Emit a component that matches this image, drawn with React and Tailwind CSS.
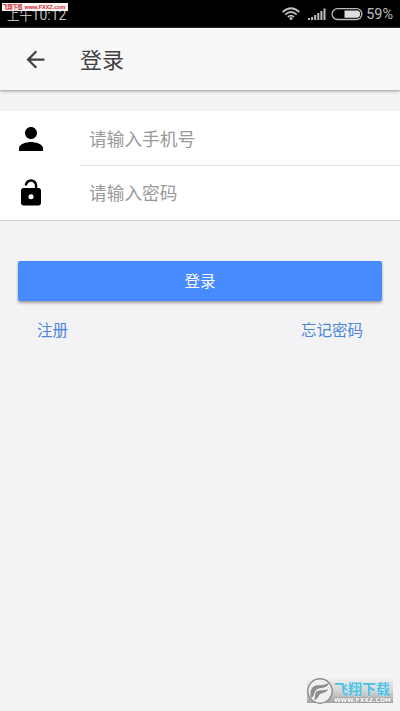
import React from "react";

function StatusBar() {
  return (
    <header className="relative flex h-7 shrink-0 items-center justify-between border-b border-[#2c2c2c] bg-black pr-[6px] pl-[7px] text-[#bdbdbd]">
      <svg width="64" height="28" viewBox="0 0 64 28" className="block">
        <text x="0" y="20" fontSize="14.5" fill="currentColor" textLength="25" lengthAdjust="spacingAndGlyphs">上午</text>
        <text x="24.5" y="19.5" fontSize="15.5" fill="currentColor" textLength="35" lengthAdjust="spacingAndGlyphs" fontFamily="Roboto">10:12</text>
      </svg>
      <div className="flex h-7 items-center">
        <svg width="83" height="28" viewBox="0 0 83 28" fill="none" stroke="currentColor">
          <g strokeWidth="1.8">
            <path d="M1.6 12.1Q10 4.4 18.4 12.1" />
            <path d="M4.3 14.6Q10 9.3 15.7 14.6" />
            <path d="M6.9 17Q10 14.2 13.1 17" />
          </g>
          <circle cx="10" cy="18.5" r="1.5" fill="currentColor" stroke="none" />
          <path strokeWidth="2" d="M28 20v-2M31.1 20v-3M34.2 20v-5M37.3 20v-7M40.4 20v-9M43.5 20V8.5" />
          <rect x="51.100" y="8.7" width="29.8" height="10.8" rx="5.4" strokeWidth="1.3" />
          <path d="M63.5 10.4h12a3.7 3.7 0 0 1 0 7.4h-12z" fill="#dedede" stroke="none" />
        </svg>
        <svg width="30" height="28" viewBox="0 0 30 28">
          <text x="2.2" y="19.3" fontSize="14.5" fill="currentColor" textLength="26.8" lengthAdjust="spacingAndGlyphs" fontFamily="Roboto">59%</text>
        </svg>
      </div>
      <svg className="absolute top-[3px] left-[2px]" width="66" height="8" viewBox="0 0 66 8">
        <rect width="66" height="8" fill="#fff5f5" />
        <g fill="#d51e2d" fontWeight="700">
          <text x="0.5" y="6.4" fontSize="6" textLength="20" lengthAdjust="spacingAndGlyphs">飞翔下载</text>
          <text x="22.5" y="6.3" fontSize="6.2" textLength="41" lengthAdjust="spacingAndGlyphs" fontFamily="Liberation Sans">www.FXXZ.com</text>
        </g>
      </svg>
    </header>
  );
}

function Field({ icon, label, divided }) {
  return (
    <div className="flex h-[54px] items-stretch">
      <div className="flex w-[62px] shrink-0 items-center justify-center pt-px">{icon}</div>
      <div className={`ml-[18px] flex flex-1 items-center pt-px pl-[9px] text-[17.7px] text-[#999] ${divided ? "shadow-[0_1px_0_#e4e4e4]" : ""}`}>
        {label}
      </div>
    </div>
  );
}

function Watermark() {
  return (
    <svg width="88" height="26" viewBox="0 0 88 26">
      <defs>
        <linearGradient id="plate" x1="0" y1="0" x2="0" y2="1">
          <stop offset="0" stopColor="#eeeeef" />
          <stop offset="0.55" stopColor="#cfcfd0" />
          <stop offset="1" stopColor="#a3a3a4" />
        </linearGradient>
      </defs>
      <rect x="1" y="1" width="86" height="24" fill="url(#plate)" />
      <circle cx="14" cy="13" r="12.2" fill="#f0f0f0" stroke="#8b8b8b" strokeWidth="1.4" />
      <path d="M6 10C9 5.500 16 8.500 23 5C21.500 10 16.500 9.500 12.500 10.500C9.500 11.300 8.500 14 7.500 18L5 20C4 16 4.300 12.500 6 10Z" fill="#8d8d8d" />
      <path d="M10 14C12.500 11.200 17 13.400 22 11C20.500 15.400 16.500 14.400 14.200 16C12.500 17.400 12.500 20.500 8 22.500C9.500 19.500 8.500 17 10 14Z" fill="#8d8d8d" />
      <text x="28" y="15.8" fontSize="14" fontWeight="700" textLength="56" lengthAdjust="spacingAndGlyphs" fill="#4dbfe2" stroke="#e8f7fc" strokeWidth="0.5" paintOrder="stroke">飞翔下载</text>
      <text x="28" y="23.6" fontSize="6" fontWeight="700" textLength="57" lengthAdjust="spacingAndGlyphs" fill="#fff" stroke="#8a8a8a" strokeWidth="0.6" paintOrder="stroke" fontFamily="DejaVu Sans">WWW.FXXZ.COM</text>
    </svg>
  );
}

export default function App() {
  return (
    <div className="flex h-[711px] w-[400px] flex-col overflow-hidden bg-[#f3f3f6] font-['Noto_Sans_CJK_SC',sans-serif]">
      <StatusBar />
      <nav className="z-10 flex h-[62px] shrink-0 items-center bg-[#f8f8f8] pl-[22px] shadow-[0_1px_3px_rgba(0,0,0,0.4)]">
        <svg width="27" height="27" viewBox="0 0 24 24" fill="#424242">
          <path d="M20 11H7.830l5.590-5.590L12 4l-8 8 8 8 1.410-1.410L7.830 13H20v-2z" />
        </svg>
        <h1 className="ml-[31px] pb-[2px] text-[22px] leading-8 text-[#424242]">登录</h1>
      </nav>
      <main className="flex flex-1 flex-col pt-[21px]">
        <section className="h-[110px] border-b border-[#d6d6da] bg-white">
          <Field
            divided
            label="请输入手机号"
            icon={
              <svg width="36" height="36" viewBox="0 0 24 24">
                <path d="M12 12c2.210 0 4-1.790 4-4s-1.790-4-4-4-4 1.790-4 4 1.790 4 4 4zm0 2c-2.670 0-8 1.340-8 4v2h16v-2c0-2.660-5.330-4-8-4z" />
              </svg>
            }
          />
          <Field
            label="请输入密码"
            icon={
              <svg width="30" height="30" viewBox="0 0 24 24" className="mt-px">
                <path
                  fillRule="evenodd"
                  d="M18 8h-1V6c0-2.760-2.240-5-5-5S7 3.240 7 6h1.900c0-1.710 1.390-3.100 3.100-3.100s3.100 1.390 3.100 3.100v2H6c-1.100 0-2 .9-2 2v10c0 1.100.9 2 2 2h12c1.100 0 2-.9 2-2V10c0-1.100-.9-2-2-2zM12 17a2 2 0 1 1 0-4 2 2 0 0 1 0 4z"
                />
              </svg>
            }
          />
        </section>
        <button className="mx-[18px] mt-10 h-10 rounded-[2px] bg-[#488aff] text-[15.5px] text-white shadow-[0_2px_3px_rgba(0,0,0,0.35)]">登录</button>
        <div className="mt-4 flex justify-between pr-[37px] pl-[37px] text-[15.5px] leading-6 text-[#4b85d9]">
          <a>注册</a>
          <a>忘记密码</a>
        </div>
        <footer className="mt-auto flex justify-end pr-[6px] pb-[7px]">
          <Watermark />
        </footer>
      </main>
    </div>
  );
}
